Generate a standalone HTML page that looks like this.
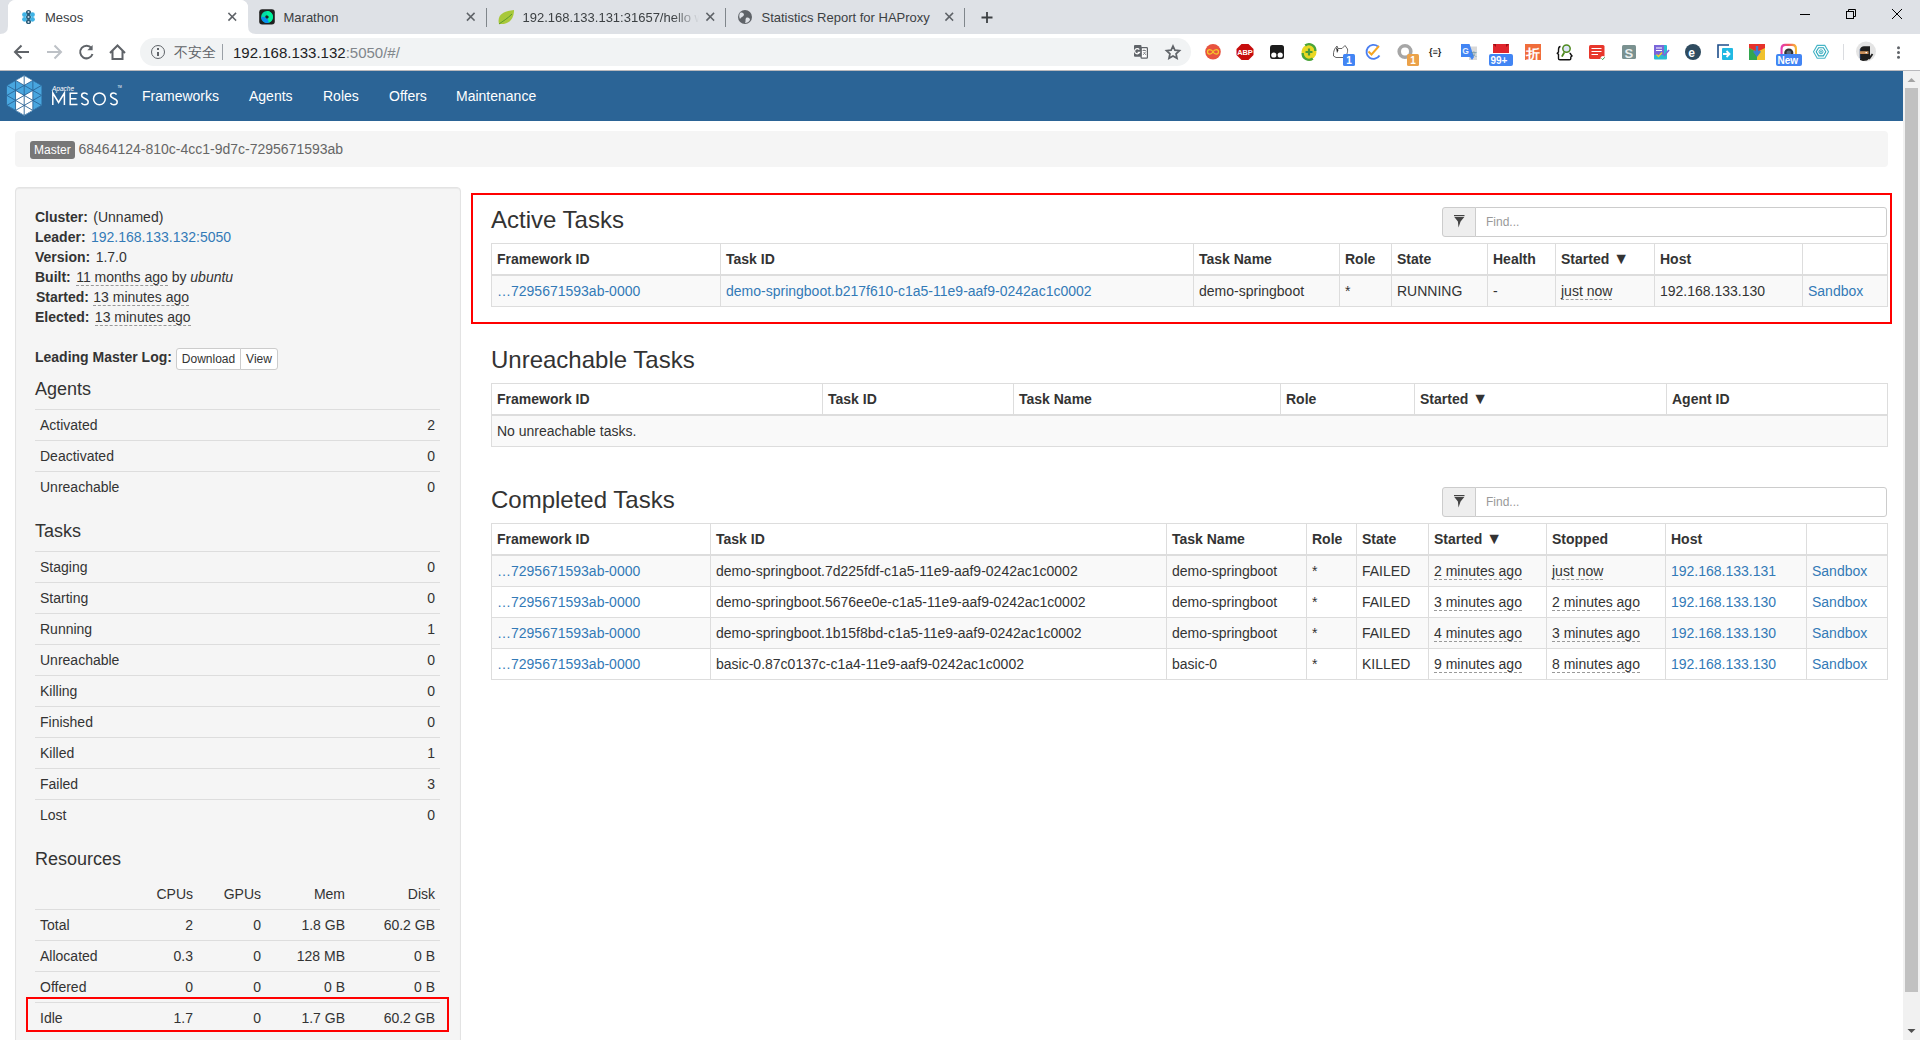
<!DOCTYPE html>
<html><head><meta charset="utf-8"><title>Mesos</title>
<style>
*{box-sizing:border-box;margin:0;padding:0}
html,body{width:1920px;height:1040px;overflow:hidden;background:#fff;font-family:"Liberation Sans",sans-serif;font-size:14px;line-height:20px;color:#333}
.abs{position:absolute}
/* chrome */
#tabstrip{position:absolute;left:0;top:0;width:1920px;height:34px;background:#dee1e6}
.tab{position:absolute;top:0;height:34px;font-size:12px;color:#3c4043}
.tab .t{position:absolute;top:11px;line-height:14px;white-space:nowrap}
.tab .x{position:absolute;top:9px;width:16px;height:16px}
.sep{position:absolute;top:7px;width:1px;height:20px;background:#9aa0a6}
#activetab{position:absolute;left:8px;top:0;width:240px;height:34px;background:#fff;border-radius:8px 8px 0 0}
#toolbar{position:absolute;left:0;top:34px;width:1920px;height:36px;background:#fff}
#omni{position:absolute;left:140px;top:38px;width:1051px;height:28px;background:#f1f3f4;border-radius:14px}
#nav{position:absolute;left:0;top:71px;width:1903px;height:50px;background:#2b6496}
#nav a{position:absolute;top:17px;color:#fff;font-size:14px;line-height:18px;text-decoration:none}
#scroll{position:absolute;left:1903px;top:71px;width:17px;height:969px;background:#f1f1f1}
#tbline{position:absolute;left:0;top:70px;width:1920px;height:1px;background:#b9b9bd}
#thumb{position:absolute;left:1905px;top:88px;width:13px;height:904px;background:#c1c1c1}
a{color:#337ab7;text-decoration:none}
.well{position:absolute;background:#f5f5f5;border:1px solid #e3e3e3;border-radius:4px;box-shadow:inset 0 1px 1px rgba(0,0,0,.05)}
.crumb{position:absolute;left:15px;top:131px;width:1873px;height:36px;background:#f5f5f5;border-radius:4px}
.label{display:inline-block;background:#777;color:#fff;border-radius:3px;font-size:12px;line-height:12px;padding:3px 3px 3px 3px}
table{border-collapse:collapse;border-spacing:0}
.tb{position:absolute;table-layout:fixed;border:1px solid #ddd}
.tb th,.tb td{border:1px solid #ddd;padding:5px;line-height:20px;text-align:left;white-space:nowrap;overflow:hidden}
.tb th{font-weight:bold;border-bottom:2px solid #ddd;background:#fff}
.tb td{background:#f9f9f9}
.tb tr.even td{background:#fff}
h3{position:absolute;font-size:24px;font-weight:500;line-height:26px;color:#333;font-weight:normal}
.find{position:absolute;left:1442px;width:445px;height:30px}
.find .btn{position:absolute;left:0;top:0;width:34px;height:30px;background:#eee;border:1px solid #ccc;border-radius:3px 0 0 3px}
.find .inp{position:absolute;left:33px;top:0;width:412px;height:30px;background:#fff;border:1px solid #ccc;border-radius:0 3px 3px 0;font-size:12px;color:#999;padding:6px 10px;line-height:16px}
.tri{font-size:16px;line-height:0;position:relative;top:-0.5px}
.red{position:absolute;border:2px solid #f00}
.dashed{border-bottom:1px dashed #999}
.side{position:absolute;left:35px;width:404px}
.side b{margin-right:1.5px}
.stbl{position:absolute;left:35px;width:405px}
.stbl td{padding:5px;border-top:1px solid #ddd;line-height:20px}
.stbl td.r{text-align:right}
.stbl td.nb{border-top:none}
.navl{top:86px;color:#fff;font-size:14px;line-height:20px}
h4{position:absolute;font-size:18px;line-height:20px;font-weight:normal;color:#333}
</style></head><body>
<div id="tabstrip"></div>
<div id="activetab"></div>
<div id="toolbar"></div>
<div id="omni"></div>
<div id="nav"></div>
<div id="scroll"></div><div id="thumb"></div><div id="tbline"></div><svg class="abs" style="left:1903px;top:71px" width="17" height="969"><polygon points="4.5,11 8.5,7 12.5,11" fill="#a3a3a3"/><polygon points="4.5,958 12.5,958 8.5,962" fill="#505050"/></svg>


<!-- tabs -->
<svg class="abs" style="left:0;top:0" width="1000" height="34">
  <path d="M0,34 Q8,34 8,26 L8,8 Q8,0 16,0 L240,0 Q248,0 248,8 L248,26 Q248,34 256,34 Z" fill="#fff"/>
  <rect x="486" y="8" width="1" height="19" fill="#80868b"/>
  <rect x="725" y="8" width="1" height="19" fill="#80868b"/>
  <rect x="964" y="8" width="1" height="19" fill="#80868b"/>
  <!-- mesos favicon -->
  <g transform="translate(28.5,17)">
    <circle cx="0" cy="-4.5" r="2.6" fill="#2c5d78"/><circle cx="0" cy="0" r="2.6" fill="#2c5d78"/><circle cx="0" cy="4.5" r="2.6" fill="#2c5d78"/>
    <circle cx="-4" cy="-2.3" r="2.4" fill="#3fb3e6"/><circle cx="4" cy="-2.3" r="2.4" fill="#3fb3e6"/>
    <circle cx="-4" cy="2.3" r="2.4" fill="#3fb3e6"/><circle cx="4" cy="2.3" r="2.4" fill="#3fb3e6"/>
    <circle cx="0" cy="-5" r="1" fill="#cde"/><circle cx="0" cy="0" r="1" fill="#cde"/><circle cx="0" cy="5" r="1" fill="#cde"/>
  </g>
  <!-- close x -->
  <g stroke="#5f6368" stroke-width="1.6" stroke-linecap="square">
    <path d="M229,13.5 L235.5,20 M235.5,13.5 L229,20"/>
    <path d="M467.5,13.5 L474,20 M474,13.5 L467.5,20"/>
    <path d="M707,13.5 L713.5,20 M713.5,13.5 L707,20"/>
    <path d="M946,13.5 L952.5,20 M952.5,13.5 L946,20"/>
  </g>
  <path d="M981.5,17.5 L992.5,17.5 M987,12 L987,23" stroke="#3c4043" stroke-width="1.8"/>
  <!-- marathon favicon -->
  <rect x="259.2" y="9.2" width="15.6" height="15.4" rx="3" fill="#202020"/>
  <circle cx="267" cy="17" r="3.85" fill="none" stroke="#02dba8" stroke-width="4.1"/>
  <path d="M267,13.15 A3.85,3.85 0 0 1 268.2,20.7" fill="none" stroke="#00f29c" stroke-width="4.1"/>
  <path d="M263.15,17 A3.85,3.85 0 0 0 268.2,20.7" fill="none" stroke="#0a8ef2" stroke-width="4.1"/>
  <!-- leaf -->
  <path d="M499,24 C497,16 502,11 514,10 C514,18 510,24 501,24 Z" fill="#a8c83a"/>
  <path d="M499,24 C503,21 507,19 512,14" stroke="#5a9a2a" stroke-width="1" fill="none"/>
  <!-- globe -->
  <circle cx="745" cy="17" r="7" fill="#5f6368"/>
  <path d="M740,13 C742,12 744,13 744,15 C743,17 741,17 740,19 C739,17 739,15 740,13 Z M746,18 C748,17 750,18 750,20 C749,22 747,23 745,23 C746,21 745,20 746,18 Z" fill="#dee1e6"/>
</svg>
<div class="abs" style="left:45px;top:11px;font-size:13px;line-height:14px;color:#3c4043">Mesos</div>
<div class="abs" style="left:283.5px;top:11px;font-size:13px;line-height:14px;color:#3c4043">Marathon</div>
<div class="abs" style="left:522.5px;top:11px;width:176px;overflow:hidden;white-space:nowrap;font-size:13px;line-height:14px;color:#3c4043;-webkit-mask-image:linear-gradient(90deg,#000 150px,transparent 176px)">192.168.133.131:31657/hello world</div>
<div class="abs" style="left:761.5px;top:11px;font-size:13px;line-height:14px;color:#3c4043;white-space:nowrap">Statistics Report for HAProxy</div>
<!-- window controls -->
<svg class="abs" style="left:1790px;top:0" width="130" height="34">
  <path d="M10,14.5 L20,14.5" stroke="#000" stroke-width="1"/>
  <rect x="56.5" y="11.5" width="7" height="7" fill="none" stroke="#000" stroke-width="1"/>
  <path d="M58.5,11 L58.5,9.5 L65.5,9.5 L65.5,16.5 L64,16.5" fill="none" stroke="#000" stroke-width="1"/>
  <path d="M102,9 L112,19 M112,9 L102,19" stroke="#000" stroke-width="1"/>
</svg>
<!-- toolbar buttons -->
<svg class="abs" style="left:0;top:34px" width="140" height="36">
  <g fill="none" stroke="#5f6368" stroke-width="2">
    <path d="M29,18 L15.5,18 M21.5,11.5 L15,18 L21.5,24.5"/>
  </g>
  <g fill="none" stroke="#bdc1c6" stroke-width="2">
    <path d="M47,18 L60.5,18 M54.5,11.5 L61,18 L54.5,24.5"/>
  </g>
  <g fill="none" stroke="#5f6368" stroke-width="2">
    <path d="M91.5,14.2 A6.3,6.3 0 1 0 92.5,20"/>
    <path d="M92.6,11 L92.6,16.3 L87.3,16.3 Z" fill="#5f6368" stroke="none"/>
    <path d="M110,19 L117.5,11.5 L125,19 M112.5,17 L112.5,25 L122.5,25 L122.5,17"/>
  </g>
</svg>
<div class="abs" style="left:151px;top:45px;width:14px;height:14px;border:1.8px solid #5f6368;border-radius:50%"></div>
<div class="abs" style="left:157px;top:48px;width:2px;height:2px;background:#5f6368"></div>
<div class="abs" style="left:157px;top:51.5px;width:2px;height:4.5px;background:#5f6368"></div>
<div class="abs" style="left:174px;top:44px;font-size:14px;line-height:16px;color:#5f6368">不安全</div>
<div class="abs" style="left:222px;top:44px;width:1px;height:16px;background:#9aa0a6"></div>
<div class="abs" style="left:233px;top:44px;font-size:15px;line-height:17px;color:#202124;white-space:nowrap">192.168.133.132<span style="color:#80868b">:5050/#/</span></div>
<!-- translate + star in omnibox -->
<svg class="abs" style="left:1120px;top:34px" width="80" height="36">
  <rect x="21.1" y="13.6" width="6.3" height="10.6" rx="0.8" fill="#fff" stroke="#5f6368" stroke-width="1.2"/>
  <rect x="14" y="10.9" width="7.5" height="11.9" rx="1" fill="#5f6368"/>
  <path d="M19.3,15.6 A2.6,2.6 0 1 0 19.6,18.3 L17.6,18.3" fill="none" stroke="#fff" stroke-width="1.2"/>
  <path d="M22.5,16.5 L26,16.5 M24,15.5 L24,17 M23,21 L26,17.5 M23.5,18 L26,21" stroke="#5f6368" stroke-width="0.7" fill="none"/>
  <polygon points="53.00,12.00 54.88,16.21 59.47,16.70 56.04,19.79 57.00,24.30 53.00,22.00 49.00,24.30 49.96,19.79 46.53,16.70 51.12,16.21" fill="none" stroke="#5f6368" stroke-width="1.7" stroke-linejoin="miter"/>
</svg>

<!-- extension icons -->
<svg class="abs" style="left:1190px;top:34px" width="730" height="36" font-family="Liberation Sans">
  <!-- 1 infinity red circle -->
  <circle cx="23" cy="17.8" r="7.8" fill="#e8533f"/>
  <path d="M17.5,17.8 C17.5,14.8 21.5,14.8 23,17.8 C24.5,20.8 28.5,20.8 28.5,17.8 C28.5,14.8 24.5,14.8 23,17.8 C21.5,20.8 17.5,20.8 17.5,17.8 Z" fill="none" stroke="#f5c62a" stroke-width="1.2"/>
  <!-- 2 ABP -->
  <polygon points="51.5,10 58.5,10 63.5,15 63.5,21 58.5,26 51.5,26 46.5,21 46.5,15" fill="#c70d0d"/>
  <text x="47.2" y="21.2" font-size="7.4" font-weight="bold" fill="#fff">ABP</text>
  <!-- 3 tampermonkey -->
  <rect x="80" y="11" width="14" height="14" rx="2.5" fill="#1c1c1c"/>
  <circle cx="83.8" cy="21" r="2.6" fill="#fff"/><circle cx="90.2" cy="21" r="2.6" fill="#fff"/>
  <!-- 4 yellow green plus -->
  <circle cx="119" cy="18" r="7.5" fill="#e9d823"/>
  <path d="M115.2,11.5 A6.3,6.3 0 0 1 125.3,17" fill="none" stroke="#4aa53a" stroke-width="2.4"/>
  <path d="M122.8,24.5 A6.3,6.3 0 0 1 112.7,19" fill="none" stroke="#4aa53a" stroke-width="2.4"/>
  <path d="M115.5,18 L122.5,18 M119,14.5 L119,21.5" stroke="#4a9a3a" stroke-width="2.2"/>
  <!-- 5 cat + badge -->
  <path d="M143.5,22 C143,17 145,14 147,12 L148,14.5 L152,14.5 L155,11.5 L157.5,15 C158,18 157,22 153,23.5 L146,23.5 Z" fill="#fff" stroke="#555" stroke-width="0.9"/>
  <path d="M146,13 L148.5,16 L147,19 Z" fill="#222"/>
  <rect x="153" y="20" width="12" height="12" rx="1.5" fill="#4285f4"/>
  <text x="156.2" y="30" font-size="10" font-weight="bold" fill="#fff">1</text>
  <!-- 6 blue check circle -->
  <path d="M188,12.5 A7,7 0 1 0 189.5,21.5" fill="none" stroke="#4a7ef0" stroke-width="1.8"/>
  <path d="M178.5,17.5 L181.5,20.5 L189,12" fill="none" stroke="#f6a623" stroke-width="1.9"/>
  <!-- 7 gray ring + orange badge -->
  <circle cx="215" cy="17.5" r="5.8" fill="none" stroke="#a6a6a6" stroke-width="3.6"/>
  <rect x="217" y="20" width="12" height="12" rx="1.5" fill="#eba24a"/>
  <text x="220.2" y="30" font-size="10" font-weight="bold" fill="#fff">1</text>
  <!-- 8 {=} -->
  <text x="239" y="21" font-size="9" font-weight="bold" fill="#222">{≡}</text>
  <!-- 9 google translate -->
  <rect x="279" y="12.5" width="8" height="13.5" fill="#d9d9d9"/>
  <polygon points="271,10 279.5,10 284,23 282,26 280,23 271,23" fill="#4285f4"/>
  <text x="272.3" y="19.8" font-size="8.5" font-weight="bold" fill="#e8f0fe">G</text>
  <text x="281.2" y="21.5" font-size="6" fill="#5f8a9a">文</text>
  <!-- 10 red + 99+ -->
  <rect x="303" y="10" width="16" height="9" fill="#e0262d"/>
  <path d="M303,10 L306,13 L306,10 Z M319,10 L316,13 L316,10 Z" fill="#9c1015"/>
  <rect x="299" y="20" width="24" height="12" rx="2" fill="#4285f4"/>
  <text x="300.5" y="30.2" font-size="10" font-weight="bold" fill="#fff">99+</text>
  <!-- 11 zhe orange -->
  <rect x="335" y="10" width="16" height="16" fill="#f06d3b"/>
  <text x="335.5" y="24.5" font-size="14" fill="#fff" font-weight="bold">折</text>
  <!-- 12 magnifier -->
  <path d="M370.5,12.5 C368.5,12.5 368.5,14 368.5,16 L368.5,18 L367.3,19.2 L368.5,20.4 L368.5,24.5 C368.5,25.5 369,25.8 370,25.8 L379.5,25.8 C380.5,25.8 380.8,25.3 380.8,24.5 L380.8,23 L382,22 L380.8,20.5 C380.8,19.5 380.5,19.2 379.5,19.2" fill="none" stroke="#111" stroke-width="1.4"/>
  <circle cx="376.5" cy="14.6" r="3.7" fill="#dde6f7" stroke="#4f8a1f" stroke-width="1.5"/>
  <path d="M374.3,18.4 L371.9,22.6" stroke="#4f8a1f" stroke-width="1.9"/>
  <!-- 13 red note -->
  <rect x="399" y="11" width="15.5" height="14" rx="1.5" fill="#e8372c"/>
  <path d="M401.5,14.5 L411.5,14.5 M401.5,17.5 L411.5,17.5 M401.5,20.5 L408,20.5" stroke="#fff" stroke-width="1.1"/>
  <circle cx="413" cy="24.5" r="2.5" fill="#fff"/>
  <path d="M411.5,24.5 L412.7,25.6 L414.7,23.3" stroke="#2ca24a" stroke-width="1" fill="none"/>
  <!-- 14 S gray -->
  <rect x="432" y="11" width="14" height="14" rx="1.5" fill="#7a9190"/>
  <text x="434.5" y="23.5" font-size="13" font-weight="bold" fill="#e8efef">S</text>
  <!-- 15 doc blue teal -->
  <rect x="464" y="11" width="13" height="14.5" rx="1" fill="#2bbcd1"/>
  <rect x="464" y="11" width="10" height="10" fill="#7a66d9"/>
  <path d="M466,14 L472,14 M466,16.5 L472,16.5" stroke="#fff" stroke-width="1"/>
  <path d="M466.5,20.5 L468.5,22.5 L472,18.5" stroke="#f3d21f" stroke-width="1.2" fill="none"/>
  <path d="M474,22 L479,16" stroke="#7a66d9" stroke-width="1.6"/>
  <!-- 16 dark circle e -->
  <circle cx="503" cy="18" r="8" fill="#2f4b5f"/>
  <text x="498.3" y="22.5" font-size="12" font-weight="bold" fill="#fff">e</text>
  <!-- 17 blue arrow -->
  <path d="M528,24 L528,11 L539,11" fill="none" stroke="#1d4e8a" stroke-width="1.6"/>
  <rect x="532" y="14" width="11" height="12" rx="1" fill="#21b9e3"/>
  <path d="M533,20 L539,20 M536.5,17 L539.5,20 L536.5,23" stroke="#fff" stroke-width="1.8" fill="none"/>
  <!-- 18 chrome download -->
  <rect x="559" y="10" width="16" height="16" fill="#f0c22d"/>
  <polygon points="559,10 575,10 575,14 567,18 559,14" fill="#e6312a"/>
  <polygon points="559,14 567,18 567,26 559,26" fill="#32a64e"/>
  <path d="M567,12 L567,20 M564,17 L567,21 L570,17" stroke="#3b7ed1" stroke-width="2.4" fill="none"/>
  <!-- 19 camera + New -->
  <defs><linearGradient id="rb" x1="0" x2="1" y1="0" y2="0"><stop offset="0" stop-color="#e23bbf"/><stop offset="0.5" stop-color="#f4545e"/><stop offset="1" stop-color="#f7c431"/></linearGradient></defs>
  <path d="M590.5,20 L590.5,14.5 C590.5,11.5 592,9.8 595,9.8 L602.5,9.8 C605.5,9.8 607,11.5 607,14.5 L607,20 Z" fill="url(#rb)"/>
  <path d="M592.6,20 L592.6,15 C592.6,12.8 593.6,11.9 595.6,11.9 L602,11.9 C604,11.9 604.9,12.8 604.9,15 L604.9,20 Z" fill="#fff"/>
  <circle cx="598.8" cy="19" r="4.6" fill="#333"/>
  <circle cx="598.8" cy="19" r="2.4" fill="#5a6a7a"/>
  <rect x="586" y="20" width="26" height="12" rx="2" fill="#4285f4"/>
  <text x="587.5" y="30.3" font-size="10" font-weight="bold" fill="#fff">New</text>
  <!-- 20 teal hexagon -->
  <polygon points="623.5,17.8 627.2,11.4 634.8,11.4 638.5,17.8 634.8,24.2 627.2,24.2" fill="none" stroke="#45b5c6" stroke-width="1.1"/>
  <polygon points="626.2,17.8 628.6,13.7 633.4,13.7 635.8,17.8 633.4,21.9 628.6,21.9" fill="none" stroke="#2aa7ba" stroke-width="1.1"/>
  <circle cx="631" cy="17.8" r="2" fill="none" stroke="#2aa7ba" stroke-width="0.9"/>
  <circle cx="631" cy="17.8" r="0.9" fill="#2aa7ba"/>
  <!-- separator -->
  <rect x="653" y="10" width="1" height="16" fill="#dadce0"/>
  <!-- avatar -->
  <circle cx="676" cy="17.5" r="10" fill="#e4e4e4"/>
  <path d="M670,26 L670,15.5 C670,13.5 672,12.5 674,12.3 L680,12.2 L680,24 L677,26.5 L673,27 Z" fill="#1e1e1e"/>
  <path d="M670.2,15 L670.2,24 L671,25" stroke="#24406e" stroke-width="0.8" fill="none"/>
  <rect x="670" y="17.2" width="8.5" height="2.8" fill="#c98f5a"/>
  <rect x="675.5" y="18" width="1.5" height="1.2" fill="#fff"/>
  <path d="M679,25 L682.5,20" stroke="#1e1e1e" stroke-width="1.8"/>
  <!-- menu dots -->
  <circle cx="708.5" cy="13.8" r="1.5" fill="#5f6368"/>
  <circle cx="708.5" cy="18.5" r="1.5" fill="#5f6368"/>
  <circle cx="708.5" cy="23.2" r="1.5" fill="#5f6368"/>
</svg>
<!-- navbar content -->
<svg class="abs" style="left:0;top:70px" width="140" height="51" viewBox="0 70 140 51">
<defs><clipPath id="hexclip"><polygon points="24.20,75.40 41.52,85.40 41.52,105.40 24.20,115.40 6.88,105.40 6.88,85.40"/></clipPath></defs>
<polygon points="24.20,75.40 41.52,85.40 41.52,105.40 24.20,115.40 6.88,105.40 6.88,85.40" fill="#48a6df"/>
<polygon points="24.20,75.40 32.86,80.40 24.20,85.40 15.54,80.40" fill="#fff"/><polygon points="15.54,90.40 24.20,95.40 15.54,100.40" fill="#fff"/><polygon points="32.86,90.40 24.20,95.40 32.86,100.40" fill="#fff"/><polygon points="15.54,100.40 24.20,95.40 32.86,100.40 32.86,110.40 24.20,115.40 15.54,110.40" fill="#fff"/>
<path d="M15.54,80.40 L15.54,110.40 M24.20,75.40 L24.20,115.40 M32.86,80.40 L32.86,110.40 M6.88,65.40 L41.52,85.40 M6.88,85.40 L41.52,65.40 M6.88,75.40 L41.52,95.40 M6.88,95.40 L41.52,75.40 M6.88,85.40 L41.52,105.40 M6.88,105.40 L41.52,85.40 M6.88,95.40 L41.52,115.40 M6.88,115.40 L41.52,95.40 M6.88,105.40 L41.52,125.40 M6.88,125.40 L41.52,105.40" stroke="#2b6496" stroke-width="0.9" clip-path="url(#hexclip)"/>
<text x="52" y="90.5" font-size="6.5" fill="#fff" font-family="Liberation Sans" font-style="italic">Apache</text>
<g fill="none" stroke="#fff" stroke-width="1.5">
<path d="M52.8,105 L52.8,93 L58.6,102.5 L64.4,93 L64.4,105"/>
<path d="M77.5,93.2 L70.2,93.2 L70.2,104.4 L77.5,104.4 M70.2,98.8 L76.5,98.8"/>
<path d="M87.6,94.6 C86.5,93.3 85.4,92.9 84.5,92.9 C82.6,92.9 81.6,94.1 81.6,95.6 C81.6,99 88.2,98 88.2,101.8 C88.2,103.6 86.8,104.8 84.8,104.8 C83.4,104.8 82.2,104 81.4,103"/>
<circle cx="99.4" cy="98.8" r="5.9"/>
<path d="M116.6,94.6 C115.5,93.3 114.4,92.9 113.5,92.9 C111.6,92.9 110.6,94.1 110.6,95.6 C110.6,99 117.2,98 117.2,101.8 C117.2,103.6 115.8,104.8 113.8,104.8 C112.4,104.8 111.2,104 110.4,103"/>
</g>
<text x="117.5" y="87.5" font-size="3" fill="#fff" font-family="Liberation Sans">TM</text>
</svg>
<div id="navlinks">
<a class="abs navl" style="left:142px">Frameworks</a>
<a class="abs navl" style="left:249px">Agents</a>
<a class="abs navl" style="left:323px">Roles</a>
<a class="abs navl" style="left:389px">Offers</a>
<a class="abs navl" style="left:456px">Maintenance</a>
</div>
<!-- master crumb -->
<div class="crumb"></div>
<div class="abs" style="left:30px;top:141px;height:18px;width:45px;background:#777;border-radius:3px;color:#fff;font-size:12px;line-height:18px;padding-left:4px">Master</div>
<div class="abs" style="left:78.5px;top:140px;font-size:14px;line-height:18px;color:#666">68464124-810c-4cc1-9d7c-7295671593ab</div>
<!-- sidebar -->
<div class="well" style="left:15px;top:187px;width:446px;height:880px"></div>

<div class="side" style="top:207px">
<div><b>Cluster:</b> (Unnamed)</div>
<div><b>Leader:</b> <a>192.168.133.132:5050</a></div>
<div><b>Version:</b> 1.7.0</div>
<div><b>Built:</b> <span class="dashed">11 months ago</span> by <i>ubuntu</i></div>
<div style="padding-left:1px"><b style="margin-right:0.5px">Started:</b> <span class="dashed">13 minutes ago</span></div>
<div><b>Elected:</b> <span class="dashed">13 minutes ago</span></div>
</div>
<div class="abs" style="left:35px;top:347px;font-weight:bold;line-height:20px">Leading Master Log:</div>
<div class="abs" style="left:176px;top:348px;width:65px;height:22px;background:#fff;border:1px solid #ccc;border-radius:3px 0 0 3px;font-size:12px;line-height:20px;text-align:center">Download</div>
<div class="abs" style="left:240px;top:348px;width:38px;height:22px;background:#fff;border:1px solid #ccc;border-radius:0 3px 3px 0;font-size:12px;line-height:20px;text-align:center">View</div>
<h4 style="left:35px;top:379px">Agents</h4>
<table class="stbl" style="top:409px">
<tr><td>Activated</td><td class="r">2</td></tr>
<tr><td>Deactivated</td><td class="r">0</td></tr>
<tr><td>Unreachable</td><td class="r">0</td></tr>
</table>
<h4 style="left:35px;top:521px">Tasks</h4>
<table class="stbl" style="top:551px">
<tr><td>Staging</td><td class="r">0</td></tr>
<tr><td>Starting</td><td class="r">0</td></tr>
<tr><td>Running</td><td class="r">1</td></tr>
<tr><td>Unreachable</td><td class="r">0</td></tr>
<tr><td>Killing</td><td class="r">0</td></tr>
<tr><td>Finished</td><td class="r">0</td></tr>
<tr><td>Killed</td><td class="r">1</td></tr>
<tr><td>Failed</td><td class="r">3</td></tr>
<tr><td>Lost</td><td class="r">0</td></tr>
</table>
<h4 style="left:35px;top:849px">Resources</h4>
<table class="stbl res" style="top:879px;width:405px;table-layout:fixed"><colgroup><col style="width:95px"><col style="width:68px"><col style="width:68px"><col style="width:84px"><col style="width:90px"></colgroup>
<tr><td class="nb"></td><td class="r nb">CPUs</td><td class="r nb">GPUs</td><td class="r nb">Mem</td><td class="r nb">Disk</td></tr>
<tr><td>Total</td><td class="r">2</td><td class="r">0</td><td class="r">1.8 GB</td><td class="r">60.2 GB</td></tr>
<tr><td>Allocated</td><td class="r">0.3</td><td class="r">0</td><td class="r">128 MB</td><td class="r">0 B</td></tr>
<tr><td>Offered</td><td class="r">0</td><td class="r">0</td><td class="r">0 B</td><td class="r">0 B</td></tr>
<tr><td>Idle</td><td class="r">1.7</td><td class="r">0</td><td class="r">1.7 GB</td><td class="r">60.2 GB</td></tr>
</table>
<div class="red" style="left:26px;top:997px;width:423px;height:35px"></div>

<div class="red" style="left:471px;top:193px;width:1421px;height:131px"></div>
<h3 style="left:491px;top:207px">Active Tasks</h3>
<div class="find" style="top:207px"><div class="btn"><svg width="34" height="30" style="position:absolute;left:-1px;top:-1px"><rect x="12" y="8" width="10.5" height="1.2" fill="#444"/><polygon points="12.3,10 22.3,10 18.6,14.5 16.5,20.5 15.9,14.5" fill="#444"/></svg></div><div class="inp">Find...</div></div>
<table class="tb" style="left:491px;top:243px;width:1397px">
<colgroup><col style="width:229px"><col style="width:473px"><col style="width:146px"><col style="width:52px"><col style="width:96px"><col style="width:68px"><col style="width:99px"><col style="width:148px"><col style="width:85px"></colgroup>
<tr><th>Framework ID</th><th>Task ID</th><th>Task Name</th><th>Role</th><th>State</th><th>Health</th><th>Started <span class="tri">&#9660;</span></th><th>Host</th><th></th></tr>
<tr><td><a>…7295671593ab-0000</a></td><td><a>demo-springboot.b217f610-c1a5-11e9-aaf9-0242ac1c0002</a></td><td>demo-springboot</td><td>*</td><td>RUNNING</td><td>-</td><td><span class="dashed">just now</span></td><td>192.168.133.130</td><td><a>Sandbox</a></td></tr>
</table>

<h3 style="left:491px;top:347px">Unreachable Tasks</h3>
<table class="tb" style="left:491px;top:383px;width:1397px">
<colgroup><col style="width:331px"><col style="width:191px"><col style="width:267px"><col style="width:134px"><col style="width:252px"><col style="width:221px"></colgroup>
<tr><th>Framework ID</th><th>Task ID</th><th>Task Name</th><th>Role</th><th>Started <span class="tri">&#9660;</span></th><th>Agent ID</th></tr>
<tr><td colspan="6">No unreachable tasks.</td></tr>
</table>

<h3 style="left:491px;top:487px">Completed Tasks</h3>
<div class="find" style="top:487px"><div class="btn"><svg width="34" height="30" style="position:absolute;left:-1px;top:-1px"><rect x="12" y="8" width="10.5" height="1.2" fill="#444"/><polygon points="12.3,10 22.3,10 18.6,14.5 16.5,20.5 15.9,14.5" fill="#444"/></svg></div><div class="inp">Find...</div></div>
<table class="tb" style="left:491px;top:523px;width:1397px">
<colgroup><col style="width:219px"><col style="width:456px"><col style="width:140px"><col style="width:50px"><col style="width:72px"><col style="width:118px"><col style="width:119px"><col style="width:141px"><col style="width:81px"></colgroup>
<tr><th>Framework ID</th><th>Task ID</th><th>Task Name</th><th>Role</th><th>State</th><th>Started <span class="tri">&#9660;</span></th><th>Stopped</th><th>Host</th><th></th></tr>
<tr><td><a>…7295671593ab-0000</a></td><td>demo-springboot.7d225fdf-c1a5-11e9-aaf9-0242ac1c0002</td><td>demo-springboot</td><td>*</td><td>FAILED</td><td><span class="dashed">2 minutes ago</span></td><td><span class="dashed">just now</span></td><td><a>192.168.133.131</a></td><td><a>Sandbox</a></td></tr>
<tr class="even"><td><a>…7295671593ab-0000</a></td><td>demo-springboot.5676ee0e-c1a5-11e9-aaf9-0242ac1c0002</td><td>demo-springboot</td><td>*</td><td>FAILED</td><td><span class="dashed">3 minutes ago</span></td><td><span class="dashed">2 minutes ago</span></td><td><a>192.168.133.130</a></td><td><a>Sandbox</a></td></tr>
<tr><td><a>…7295671593ab-0000</a></td><td>demo-springboot.1b15f8bd-c1a5-11e9-aaf9-0242ac1c0002</td><td>demo-springboot</td><td>*</td><td>FAILED</td><td><span class="dashed">4 minutes ago</span></td><td><span class="dashed">3 minutes ago</span></td><td><a>192.168.133.130</a></td><td><a>Sandbox</a></td></tr>
<tr class="even"><td><a>…7295671593ab-0000</a></td><td>basic-0.87c0137c-c1a4-11e9-aaf9-0242ac1c0002</td><td>basic-0</td><td>*</td><td>KILLED</td><td><span class="dashed">9 minutes ago</span></td><td><span class="dashed">8 minutes ago</span></td><td><a>192.168.133.130</a></td><td><a>Sandbox</a></td></tr>
</table>
</body></html>
